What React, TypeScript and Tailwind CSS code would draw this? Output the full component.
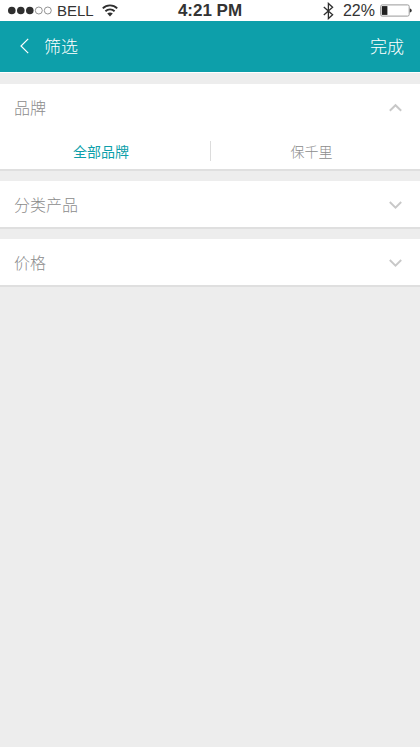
import { useState } from 'react';

interface Section {
  id: string;
  title: string;
  options: string[];
}

const sections: Section[] = [
  { id: 'brand', title: '品牌', options: ['全部品牌', '保千里'] },
  { id: 'category', title: '分类产品', options: [] },
  { id: 'price', title: '价格', options: [] },
];

function StatusBar() {
  return (
    <div className="flex h-[21px] items-center justify-between bg-white px-2 font-['Liberation_Sans',sans-serif] text-base leading-[21px] text-[#333]">
      <div className="flex flex-1 items-center gap-1">
        <svg width="45" height="9" viewBox="0 0 45 9" aria-hidden="true">
          <g fill="#2f2f2f">
            <circle cx="3.8" cy="4.5" r="3.8" />
            <circle cx="12.8" cy="4.5" r="3.8" />
            <circle cx="21.8" cy="4.5" r="3.8" />
          </g>
          <g fill="none" stroke="#777" strokeWidth="0.8">
            <circle cx="30.8" cy="4.5" r="3.5" />
            <circle cx="39.8" cy="4.5" r="3.5" />
          </g>
        </svg>
        <span className="text-[15px]">BELL</span>
        <svg className="ml-1" width="16" height="13" viewBox="0 0 16 13" fill="none" stroke="#2f2f2f" strokeWidth="1.9" aria-hidden="true">
          <path d="M0.8 4.4 C4.8 0.4 11.2 0.4 15.2 4.4" />
          <path d="M3.4 7.2 C6 4.7 10 4.7 12.6 7.2" />
          <path d="M5.2 9.6 C7 8 9 8 10.8 9.6 L8 12.4 Z" fill="#2f2f2f" stroke="none" />
        </svg>
      </div>
      <div className="text-[17px] font-bold">4:21 PM</div>
      <div className="flex flex-1 items-center justify-end gap-[5px]">
        <svg className="mr-1" width="11" height="18" viewBox="0 0 11 18" fill="none" stroke="#2f2f2f" strokeWidth="1.3" aria-hidden="true">
          <path d="M0.8 5 L9.6 12.8 L5.4 16.6 V1.4 L9.6 5.2 L0.8 13" />
        </svg>
        <span>22%</span>
        <svg width="32" height="13" viewBox="0 0 32 13" aria-hidden="true">
          <rect x="0.6" y="0.9" width="28.6" height="11.2" rx="1.6" fill="#fff" stroke="#999" strokeWidth="1" />
          <rect x="1.8" y="2.1" width="5.6" height="8.8" fill="#222" />
          <path d="M29.8 4.4 C32.4 4.8 32.4 8.2 29.8 8.6 Z" fill="#333" />
        </svg>
      </div>
    </div>
  );
}

function Chevron({ open }: { open: boolean }) {
  return (
    <svg width="13" height="9" viewBox="0 0 13 9" fill="none" stroke="#c8c8c8" strokeWidth="1.9" aria-hidden="true">
      <path d={open ? 'M0.8 7.8 L6.5 2.2 L12.2 7.8' : 'M0.8 2 L6.5 7.6 L12.2 2'} />
    </svg>
  );
}

export default function App() {
  const [openIds, setOpenIds] = useState<string[]>(['brand']);
  const [selected, setSelected] = useState('全部品牌');

  const toggle = (id: string) =>
    setOpenIds((prev) => (prev.includes(id) ? prev.filter((x) => x !== id) : [...prev, id]));

  return (
    <div className="min-h-screen bg-[#ededed] font-['Noto_Sans_CJK_SC',sans-serif] font-light">
      <StatusBar />

      <header className="flex h-[52px] items-center justify-between border-b border-white bg-[#0d9faa] pl-5 pr-4 text-[17px] leading-6 text-white">
        <button type="button" className="flex items-center gap-[15px] pb-px">
          <svg width="9" height="16" viewBox="0 0 9 16" fill="none" stroke="#fff" strokeWidth="1.2" aria-hidden="true">
            <path d="M8.2 0.8 L1 8 L8.2 15.2" />
          </svg>
          <h1>筛选</h1>
        </button>
        <button type="button" className="pb-px">完成</button>
      </header>

      <main className="flex flex-col gap-2.5 pt-[11px]">
        {sections.map((s) => {
          const open = openIds.includes(s.id);
          return (
            <section key={s.id} className="border-b-2 border-[#dfdfdf] bg-white">
              <button
                type="button"
                onClick={() => toggle(s.id)}
                aria-expanded={open}
                className="flex h-[46px] w-full items-center justify-between pl-[14px] pr-[18px] text-base text-[#8c8c8c]"
              >
                <span>{s.title}</span>
                <Chevron open={open} />
              </button>
              {open && s.options.length > 0 && (
                <div className="grid grid-cols-2 pt-[11px] pb-2">
                  {s.options.map((o) => (
                    <button
                      key={o}
                      type="button"
                      onClick={() => setSelected(o)}
                      className={`h-5 border-[#dcdcdc] pr-2 text-sm leading-5 even:border-l ${selected === o ? 'font-normal text-[#0d9faa]' : 'text-[#8c8c8c]'}`}
                    >
                      {o}
                    </button>
                  ))}
                </div>
              )}
            </section>
          );
        })}
      </main>
    </div>
  );
}
